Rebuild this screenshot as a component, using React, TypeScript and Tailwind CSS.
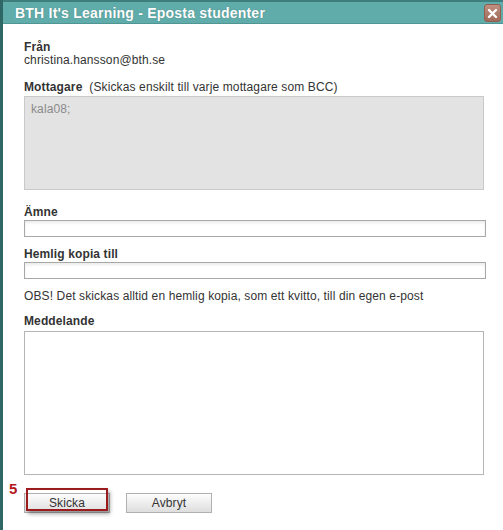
import React from "react";

export default function App() {
  const font = { fontFamily: '"Liberation Sans", Arial, sans-serif' };
  return (
    <div className="w-[503px] h-[530px] bg-white flex overflow-hidden" style={font}>
      <div className="w-[3px] bg-[#2f6766] shrink-0" />
      <div className="flex-1 flex flex-col min-w-0">
        {/* title bar */}
        <div className="h-[24px] shrink-0 bg-[#60acaa] border-t-2 border-t-[#3e7f7d] border-b border-b-[#4e9593] flex items-center pl-[12px] relative">
          <span className="text-white font-bold text-[14px] tracking-[0.22px] leading-[18px] [text-shadow:0_0_1px_rgba(0,0,0,0.3)]">
            BTH It's Learning - Eposta studenter
          </span>
          <div className="absolute right-[2px] top-[2px] w-[17px] h-[18px] rounded-[3px] bg-gradient-to-b from-[#c09080] to-[#a06a5a] border border-[#8f5e50] flex items-center justify-center">
            <svg width="11" height="11" viewBox="0 0 11 11">
              <path d="M2 2 L9 9 M9 2 L2 9" stroke="#ffffff" strokeWidth="2.4" strokeLinecap="round" />
            </svg>
          </div>
        </div>
        <div className="flex-1 relative pl-[21px] pr-[17px] pt-[17px] text-[12px] tracking-[0.12px] text-[#333]">
          <div className="font-bold leading-[13px]">Från</div>
          <div className="leading-[13px]">christina.hansson@bth.se</div>
          <div className="mt-[13px] leading-[15px]">
            <span className="font-bold">Mottagare</span>
            <span>&nbsp; (Skickas enskilt till varje mottagare som BCC)</span>
          </div>
          <div className="mt-[1px] w-[460px] h-[94px] bg-[#e3e3e3] border border-[#c9c9c9] px-[6px] pt-[5px] text-[#8a8a8a] leading-[15px]">
            kala08;
          </div>
          <div className="mt-[15px] font-bold leading-[15px]">Ämne</div>
          <div className="w-[462px] h-[17px] border border-[#a8a8a8] bg-white shadow-[inset_0_2px_3px_rgba(0,0,0,0.08)]" />
          <div className="mt-[10px] font-bold leading-[15px]">Hemlig kopia till</div>
          <div className="w-[462px] h-[17px] border border-[#a8a8a8] bg-white shadow-[inset_0_2px_3px_rgba(0,0,0,0.08)]" />
          <div className="mt-[10px] leading-[15px]">
            OBS! Det skickas alltid en hemlig kopia, som ett kvitto, till din egen e-post
          </div>
          <div className="mt-[10px] font-bold leading-[15px]">Meddelande</div>
          <div className="mt-[2px] w-[460px] h-[144px] border border-[#b5b5b5] bg-white" />
          <div className="mt-[18px] flex gap-[16px]">
            <div className="w-[86px] h-[20px] border border-[#b0b0b0] bg-gradient-to-b from-[#fdfdfd] to-[#dedede] flex items-center justify-center text-[12px] text-[#333]">
              Skicka
            </div>
            <div className="w-[86px] h-[20px] border border-[#b0b0b0] bg-gradient-to-b from-[#fdfdfd] to-[#dedede] flex items-center justify-center text-[12px] text-[#333]">
              Avbryt
            </div>
          </div>
          {/* annotation */}
          <div className="absolute left-[23px] top-[464px] w-[82px] h-[23px] border-2 border-[#9c1b1f] shadow-[2px_3px_4px_rgba(0,0,0,0.35)]" />
          <div className="absolute left-[6px] top-[457px] text-[#b3191c] font-bold text-[15px] leading-[16px]">5</div>
        </div>
      </div>
    </div>
  );
}
